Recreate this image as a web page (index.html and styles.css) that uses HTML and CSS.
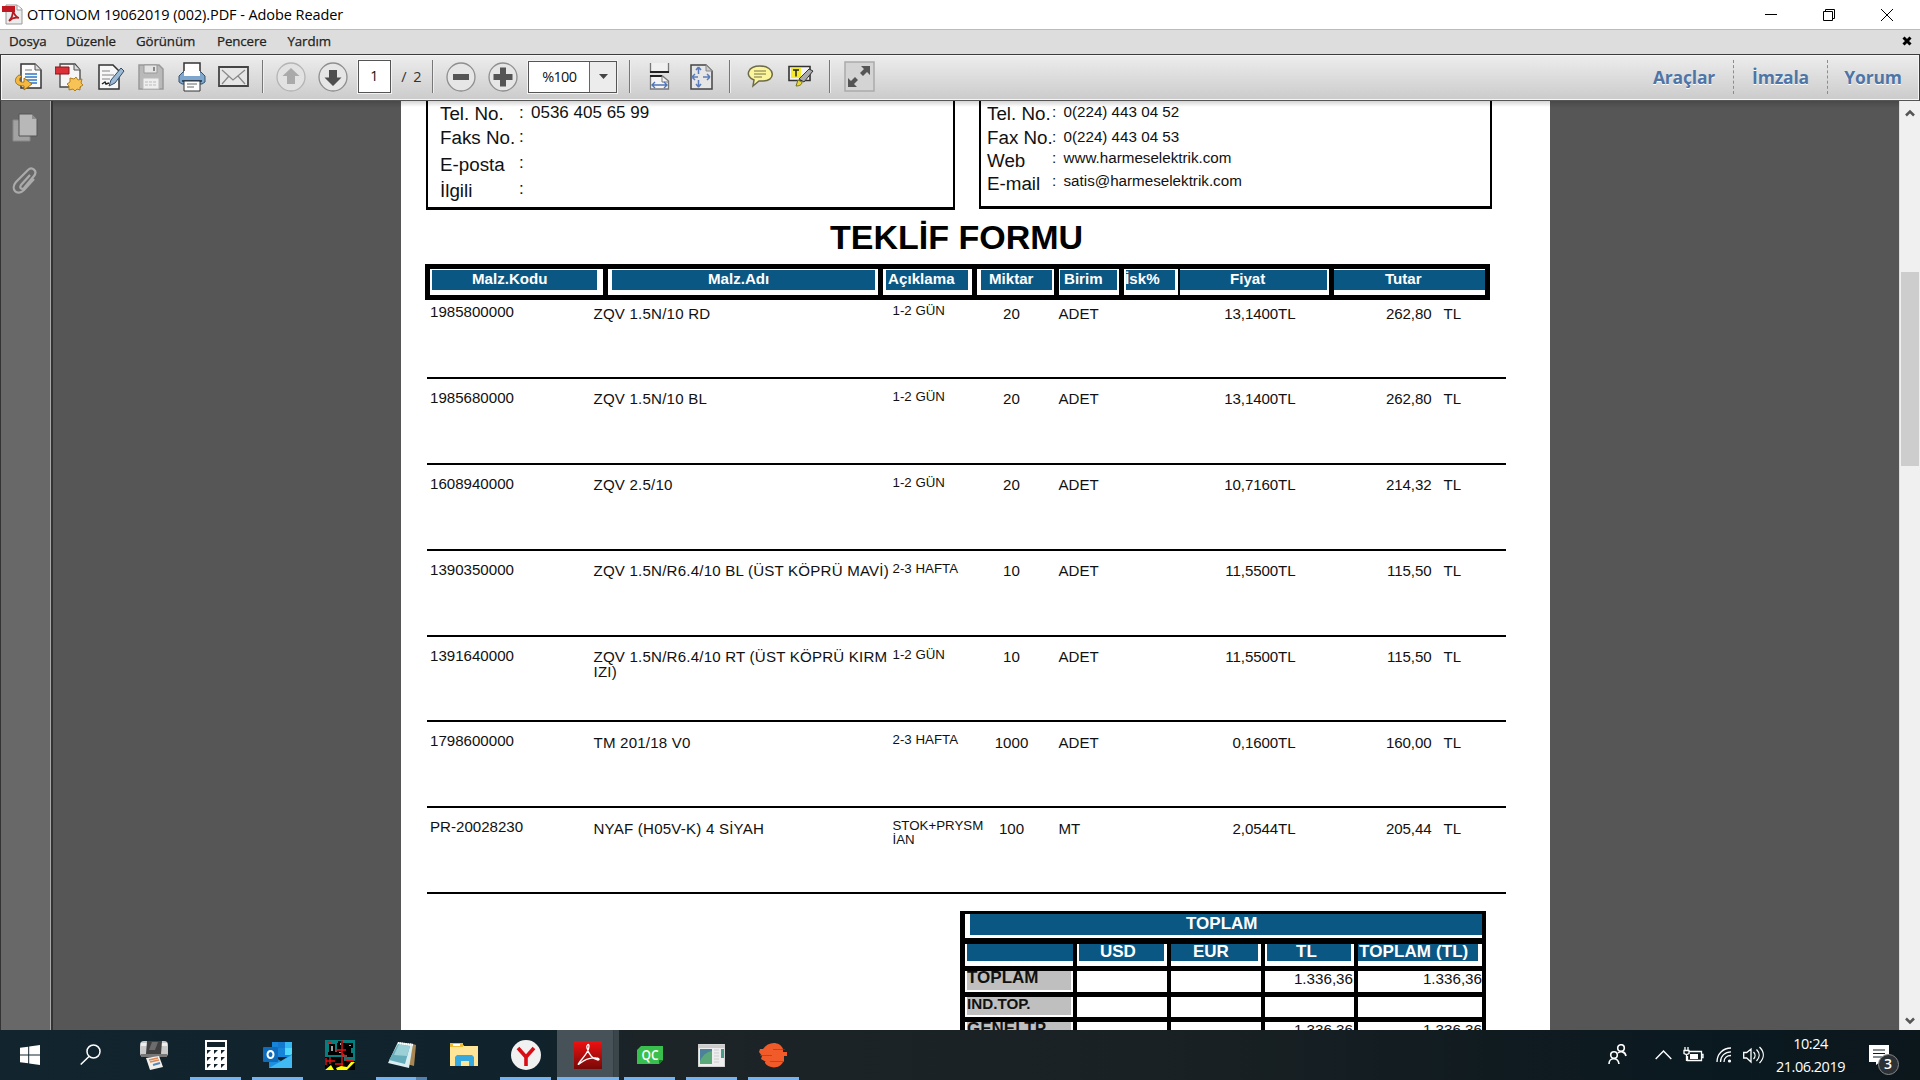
FILE: index.html
```html
<!DOCTYPE html>
<html lang="tr">
<head>
<meta charset="utf-8">
<title>OTTONOM 19062019 (002).PDF - Adobe Reader</title>
<link rel="stylesheet" href="styles.css">
</head>
<body>
<div class="titlebar">
  <svg class="app-icon" width="21" height="21" viewBox="0 0 21 21"><path d="M4 1h11l5 4v15H4z" fill="#ececec" stroke="#999"/><path d="M15 1v5h5" fill="#fff" stroke="#999"/><path d="M0 2h13v6H0z" fill="#c01722"/><path d="M11 6c1 4 2 7 6 8-4-1-7 0-10 3 3-3 4-7 4-11z" fill="none" stroke="#b11c22" stroke-width="1.8"/></svg>
  <span class="title-text">OTTONOM 19062019 (002).PDF - Adobe Reader</span>
  <div class="window-buttons">
    <svg width="12" height="12" viewBox="0 0 12 12"><path d="M0 5.5h12" stroke="#000"/></svg>
    <svg width="12" height="12" viewBox="0 0 12 12" fill="none" stroke="#000"><path d="M.5 2.500h9v9h-9zM2.500 2.500v-2h9v9h-2"/></svg>
    <svg width="12" height="12" viewBox="0 0 12 12"><path d="M0 0l12 12M12 0L0 12" stroke="#000"/></svg>
  </div>
</div>
<div class="menubar">
  <span class="m1">Dosya</span><span class="m2">Düzenle</span><span class="m3">Görünüm</span><span class="m4">Pencere</span><span class="m5">Yardım</span>
  <svg class="doc-close" width="10" height="10" viewBox="0 0 10 10"><path d="M1.500 1.500l7 7M8.500 1.500l-7 7" stroke="#000" stroke-width="3"/></svg>
</div>
<div class="toolbar">
  <div class="tools">
    <svg width="28" height="28" viewBox="0 0 28 28"><path d="M7 1h14l6 6v18H7z" fill="#fbfbfb" stroke="#333" stroke-width="1.500"/><path d="M21 1v6h6" fill="#ddd" stroke="#555"/><path d="M11 7h7" stroke="#bbb" stroke-width="2"/><path d="M11 11h12M11 14h12M11 17h12M14 20h9" stroke="#2f78c8" stroke-width="1.700"/><path d="M5 12c-5 3-6 11 5 11v4l8-6-8-6v4c-5 1-6-3-2-6z" fill="#f5b942" stroke="#9a6b10" stroke-width=".9"/></svg>
    <svg width="28" height="28" viewBox="0 0 28 28"><path d="M5 1h15l5 6v17H5z" fill="#f6f6f6" stroke="#444" stroke-width="1.300"/><path d="M19 1v6h6" fill="#ddd" stroke="#555"/><path d="M0 4h14v7H0z" fill="#dc3038" stroke="#8d1319"/><path d="M21 14l2 3 4-1-1 4 2 2-3 2v3l-3-1-2 2-2-2-4 1v-4l-2-2 3-2v-4l4 1z" fill="#f7c256" stroke="#b17f1b"/></svg>
    <svg width="28" height="28" viewBox="0 0 28 28"><path d="M2 2h14l6 6v18H2z" fill="#f7f7f7" stroke="#333" stroke-width="1.500"/><path d="M5 8h8M5 12h12M5 16h8" stroke="#aaa" stroke-width="1.300"/><path d="M5 21l3-2 1 2 3-1" fill="none" stroke="#222" stroke-width="1.500"/><path d="M12 23l2-6L24 5l3 3-9 12z" fill="#9db9d3" stroke="#2f4e6b"/></svg>
    <svg width="26" height="26" viewBox="0 0 26 26"><path d="M1 1h20l4 4v20H1z" fill="#b9b9b9" stroke="#999" stroke-width="1.500"/><path d="M6 1h13v8H6z" fill="#e4e4e4" stroke="#999"/><path d="M15 3h2v4h-2z" fill="#888"/><path d="M5 14h16v11H5z" fill="#eee" stroke="#bbb"/><path d="M7 18h12M7 21h12" stroke="#bbb" stroke-dasharray="3 1"/></svg>
    <svg width="28" height="30" viewBox="0 0 28 30"><path d="M6 1h16v12H6z" fill="#fff" stroke="#333" stroke-width="1.500"/><path d="M5 10h18l4 4v6l-3 2H4l-3-2v-6z" fill="#7fa6cc" stroke="#35526e"/><path d="M6 9h16v5H6z" fill="#fff"/><path d="M4 18h20v2H4z" fill="#334b62"/><path d="M6 19h16v10H6z" fill="#fff" stroke="#333"/><path d="M9 22h10M9 25h7" stroke="#999" stroke-width="1.500"/></svg>
    <svg width="31" height="22" viewBox="0 0 31 22"><path d="M1 1h29v19H1z" fill="#e6e6e6" stroke="#444" stroke-width="1.800"/><path d="M4 4l11 10L27 4M4 18l7-8M27 18l-7-8" fill="none" stroke="#888" stroke-width="1.200"/></svg>
    <i class="sep"></i>
    <svg width="30" height="30" viewBox="0 0 30 30"><circle cx="15" cy="15" r="14" fill="#e2e2e2" stroke="#b4b4b4" stroke-width="1.300"/><path d="M15 6l8.500 8H19v8h-8v-8H6.500z" fill="#aaa"/></svg>
    <svg width="30" height="30" viewBox="0 0 30 30"><circle cx="15" cy="15" r="14" fill="#e6e6e6" stroke="#8e8e8e" stroke-width="1.300"/><path d="M15 24l8.500-8.500H19V8h-8v7.500H6.500z" fill="#4e4e4e"/></svg>
    <span class="page-input">1</span>
    <span class="page-count">/&nbsp; 2</span>
    <i class="sep"></i>
    <svg width="30" height="30" viewBox="0 0 30 30"><circle cx="15" cy="15" r="14" fill="#e6e6e6" stroke="#8e8e8e" stroke-width="1.300"/><path d="M7 12h16v6H7z" fill="#555"/></svg>
    <svg width="30" height="30" viewBox="0 0 30 30"><circle cx="15" cy="15" r="14" fill="#e6e6e6" stroke="#8e8e8e" stroke-width="1.300"/><path d="M5.500 12H12V5.500h6V12h6.500v6H18v6.500h-6V18H5.500z" fill="#555"/></svg>
    <span class="zoom-box"><b>%100</b><i><svg width="9" height="5" viewBox="0 0 9 5"><path d="M0 0h9L4.500 5z" fill="#444"/></svg></i></span>
    <i class="sep"></i>
    <svg width="21" height="27" viewBox="0 0 21 27"><path d="M1.500 0v9h18V0" fill="#f0f0f0" stroke="#777" stroke-width="1.300"/><path d="M1 9h19" stroke="#222" stroke-width="2"/><path d="M1.500 26V13h12l6 5v8z" fill="#f4f4f4" stroke="#777" stroke-width="1.300"/><path d="M1 13h12" stroke="#222" stroke-width="2"/><path d="M13 13v6h6" fill="none" stroke="#777"/><path d="M3 22h15M6 19l-3 3 3 3M15 19l3 3-3 3" fill="none" stroke="#4f74b8" stroke-width="1.400"/></svg>
    <svg width="23" height="26" viewBox="0 0 23 26"><path d="M1 1h15l6 6v18H1z" fill="#e6e6e6" stroke="#444" stroke-width="1.500"/><path d="M16 1v6h6" fill="#ccc" stroke="#888"/><path d="M8.500 3v7M8.500 3L6 6M8.500 3L11 6M8.500 23v-7M8.500 23L6 20M8.500 23l2.500-3M2 13h6M2 13l3-3M2 13l3 3M20 13h-7M20 13l-3-3M20 13l-3 3" fill="none" stroke="#5b7cba" stroke-width="1.500"/></svg>
    <i class="sep"></i>
    <svg width="26" height="23" viewBox="0 0 26 23"><path d="M13 1c16 0 16 16 2 15l-3 0-6 5 1-6C-3 11 1 1 13 1z" fill="#fbf59b" stroke="#6d6a4a" stroke-width="1.500"/><path d="M7 6h12M7 9h12M7 12h8" stroke="#77734a"/></svg>
    <svg width="26" height="23" viewBox="0 0 26 23"><path d="M1 1.500h21v14H1z" fill="#f4f4f4" stroke="#333" stroke-width="1.600"/><path d="M3 3h10v10H3z" fill="#f6ea2d"/><path d="M5 5h6M8 5v6.500" stroke="#222" stroke-width="1.500"/><path d="M11 14L21 4l4 2-9 11z" fill="#aaa" stroke="#333"/><path d="M8 21l2-6 4 2c0 3-3 4-6 4z" fill="#e8d839" stroke="#77701a"/></svg>
    <i class="sep"></i>
    <svg width="31" height="31" viewBox="0 0 31 31"><path d="M1 1h29v29H1z" fill="#d4d4d4" stroke="#aaa" stroke-width="1.500"/><path d="M17 5h9v9l-3-3-4 4-3-3 4-4z" fill="#555"/><path d="M13 26H4v-9l3 3 4-4 3 3-4 4z" fill="#555"/></svg>
  </div>
  <div class="panes"><span class="p1">Araçlar</span><span class="p2">İmzala</span><span class="p3">Yorum</span></div>
</div>
<div class="viewer">
  <div class="sidebar">
    <svg width="26" height="29" viewBox="0 0 26 29"><path d="M1 7h17v21H1z" fill="#a2a2a2" stroke="#888"/><path d="M7 1h13l5 5v17H7z" fill="#b8b8b8" stroke="#555"/><path d="M20 1v5h5" fill="#8d8d8d"/></svg>
    <svg width="26" height="29" viewBox="0 0 26 29"><path d="M18 9L9 19c-2 3 1 5 3 3L22 10c4-5-2-10-6-6L4 16c-6 7 1 15 8 8l10-11" fill="none" stroke="#ababab" stroke-width="2.200"/></svg>
  </div>
  <div class="desk">
    <div class="page">
      <div class="boxes">
        <div class="box box-left">
          <div class="line l1"><span>Tel. No.</span><i>:</i><b>0536 405 65 99</b></div>
          <div class="line l2"><span>Faks No.</span><i>:</i></div>
          <div class="line l3"><span>E-posta</span><i>:</i></div>
          <div class="line l4"><span>İlgili</span><i>:</i></div>
        </div>
        <div class="box box-right">
          <div class="line r1"><span>Tel. No.</span><i>:</i><b>0(224) 443 04 52</b></div>
          <div class="line r2"><span>Fax No.</span><i>:</i><b>0(224) 443 04 53</b></div>
          <div class="line r3"><span>Web</span><i>:</i><b>www.harmeselektrik.com</b></div>
          <div class="line r4"><span>E-mail</span><i>:</i><b>satis@harmeselektrik.com</b></div>
        </div>
      </div>
      <h1>TEKLİF FORMU</h1>
      <div class="head">
        <div class="h1"><span>Malz.Kodu</span></div><div class="h2"><span>Malz.Adı</span></div><div class="h3"><span>Açıklama</span></div><div class="h4"><span>Miktar</span></div><div class="h5"><span>Birim</span></div><div class="h6"><span>İsk%</span></div><div class="h7"><span>Fiyat</span></div><div class="h8"><span>Tutar</span></div>
      </div>
      <div class="items">
        <div class="item"><span class="code">1985800000</span><span class="name">ZQV 1.5N/10 RD</span><span class="note">1-2 GÜN</span><span class="qty">20</span><span>ADET</span><span class="num">13,1400TL</span><span class="num">262,80</span><span class="cur">TL</span></div>
        <div class="item"><span class="code">1985680000</span><span class="name">ZQV 1.5N/10 BL</span><span class="note">1-2 GÜN</span><span class="qty">20</span><span>ADET</span><span class="num">13,1400TL</span><span class="num">262,80</span><span class="cur">TL</span></div>
        <div class="item"><span class="code">1608940000</span><span class="name">ZQV 2.5/10</span><span class="note">1-2 GÜN</span><span class="qty">20</span><span>ADET</span><span class="num">10,7160TL</span><span class="num">214,32</span><span class="cur">TL</span></div>
        <div class="item"><span class="code">1390350000</span><span class="name">ZQV 1.5N/R6.4/10 BL (ÜST KÖPRÜ MAVİ)</span><span class="note">2-3 HAFTA</span><span class="qty">10</span><span>ADET</span><span class="num">11,5500TL</span><span class="num">115,50</span><span class="cur">TL</span></div>
        <div class="item"><span class="code">1391640000</span><span class="name">ZQV 1.5N/R6.4/10 RT (ÜST KÖPRÜ KIRM<br>IZI)</span><span class="note">1-2 GÜN</span><span class="qty">10</span><span>ADET</span><span class="num">11,5500TL</span><span class="num">115,50</span><span class="cur">TL</span></div>
        <div class="item"><span class="code">1798600000</span><span class="name">TM 201/18 V0</span><span class="note">2-3 HAFTA</span><span class="qty">1000</span><span>ADET</span><span class="num">0,1600TL</span><span class="num">160,00</span><span class="cur">TL</span></div>
        <div class="item"><span class="code">PR-20028230</span><span class="name">NYAF (H05V-K) 4 SİYAH</span><span class="note">STOK+PRYSM<br>İAN</span><span class="qty">100</span><span>MT</span><span class="num">2,0544TL</span><span class="num">205,44</span><span class="cur">TL</span></div>
      </div>
      <div class="totals">
        <div class="t-title"><span>TOPLAM</span></div>
        <div class="t-row t-head"><div><span></span></div><div class="c-usd"><span>USD</span></div><div class="c-eur"><span>EUR</span></div><div class="c-tl"><span>TL</span></div><div class="c-sum"><span>TOPLAM (TL)</span></div></div>
        <div class="t-row t-a"><div><span>TOPLAM</span></div><div></div><div></div><div>1.336,36</div><div>1.336,36</div></div>
        <div class="t-row t-b"><div><span>IND.TOP.</span></div><div></div><div></div><div></div><div></div></div>
        <div class="t-row t-a t-c"><div><span>GENELTP</span></div><div></div><div></div><div>1.336,36</div><div>1.336,36</div></div>
      </div>
    </div>
  </div>
  <div class="scroll">
    <svg width="10" height="8" viewBox="0 0 10 8"><path d="M1 6.500l4-4 4 4" fill="none" stroke="#555" stroke-width="2.500"/></svg>
    <div class="thumb"></div>
    <svg class="down" width="10" height="8" viewBox="0 0 10 8"><path d="M1 1.500l4 4 4-4" fill="none" stroke="#555" stroke-width="2.500"/></svg>
  </div>
</div>
<div class="taskbar">
  <div class="start"><svg width="20" height="20" viewBox="0 0 20 20" fill="#fff"><path d="M0 2.800l8.200-1.100v7.800H0zM9.200 1.500L20 0v9.500H9.200zM0 10.500h8.200v7.800L0 17.200zM9.200 10.500H20V20L9.200 18.500z"/></svg></div>
  <div class="search"><svg width="21" height="21" viewBox="0 0 21 21" fill="none" stroke="#fff" stroke-width="1.500"><circle cx="13.500" cy="7.500" r="6.500"/><path d="M9 12.500L.7 20.500"/></svg></div>
  <div class="task"><svg width="28" height="30" viewBox="0 0 28 30"><rect y="1" width="28" height="16" rx="4" fill="#c9c9c9"/><path d="M1 3h26v3H1z" fill="#eee"/><path d="M7 1h15l-1 13H6z" fill="#3f3f3f"/><path d="M12 2h6l-3 8H9z" fill="#6c6c6c"/><path d="M1 14h26v3H1z" fill="#777"/><path d="M6 18l13-2 4 11-13 3z" fill="#f1efe9"/><path d="M9 20l9-2M10 22l9-2" stroke="#d85" stroke-width="1.500"/><path d="M13 25l7-2" stroke="#58b" stroke-width="2"/></svg></div>
  <div class="task open"><svg width="22" height="30" viewBox="0 0 22 30"><path d="M0 0h22v30H0z" fill="#fff"/><path d="M2 2h18v5H2zM2 10h4l-4 4zM9 10h4l-4 4zM16 10h4l-4 4zM2 17h4l-4 4zM9 17h4l-4 4zM16 17h4l-4 4zM2 24h4l-4 4zM9 24h4l-4 4zM16 24h4l-4 4z" fill="#13232b"/></svg></div>
  <div class="task open"><svg width="30" height="28" viewBox="0 0 30 28"><path d="M9 1h20v15H9z" fill="#1685d9"/><path d="M15 1h7v6h-7z" fill="#1478cc"/><path d="M22 1h7v6h-7z" fill="#35b8f1"/><path d="M22 7h7v7h-7z" fill="#50d9ff"/><path d="M6 13l12 7 11-7v14H6z" fill="#1b90df"/><path d="M6 27l23-13v13z" fill="#41b9f2"/><rect y="6" width="15" height="15" rx="1" fill="#0f6cbd"/><ellipse cx="7.500" cy="13.500" rx="3" ry="3.600" fill="none" stroke="#fff" stroke-width="2"/></svg></div>
  <div class="task"><svg width="30" height="30" viewBox="0 0 30 30"><path d="M0 0h30v30H0z" fill="#087d7d"/><path d="M0 17h19v4h11v9H0z"/><path d="M12 3h14v12H12zM3 12h9v3H3z"/><path d="M5 5h4v7H5zM14 2h3v4h-3zM23 4h4v3h-4zM13 11h4v3h-4zM23 14h4v2h-4z" fill="#a0a0a0" stroke="#000" stroke-width="2"/><path d="M2 2h4M17 0v29M11 10h10M1 18v7M1 21h9M5 24V17M10 24h8M20 20l9 1M16 12l6 6" fill="none" stroke="#e41313" stroke-width="1.400"/><path d="M0 30l6-5 3 5zM11 28l5-2 6 1 4-5h4l-8 8H12z" fill="#ff0"/></svg></div>
  <div class="task open grouped"><svg width="28" height="27" viewBox="0 0 28 27"><path d="M22 1l6 2-2 21-7-2z" fill="#a78855"/><path d="M10 0l15 2-4 24-21-5z" fill="#d9eef1"/><path d="M10 2l12 2-5 18L1 18z" fill="#65adba"/><path d="M11 2l11 2-3 10-13-1z" fill="#9bd0d7"/><path d="M10 1l15 2" stroke="#fff" stroke-width="2" stroke-dasharray="1 1"/></svg></div>
  <div class="task"><svg width="28" height="24" viewBox="0 0 28 24"><path d="M0 0h12l2 3h14v20H0z" fill="#ffe597"/><path d="M0 0h13v4H0z" fill="#eebb35"/><path d="M3 1h7v2H3z" fill="#fff"/><path d="M5 14l2-2h15l2 2v9h-5v-5h-8v5H5z" fill="#36a9e0"/></svg></div>
  <div class="task open"><svg width="30" height="30" viewBox="0 0 30 30"><circle cx="15" cy="15" r="15" fill="#f1f1f1"/><path d="M7 8l8 9 8-9M15 16v10" fill="none" stroke="#d80d16" stroke-width="3.600"/></svg></div>
  <div class="task open active"><svg width="28" height="28" viewBox="0 0 28 28"><defs><linearGradient id="g" x2="0" y2="1"><stop stop-color="#f01110"/><stop offset="1" stop-color="#760907"/></linearGradient></defs><path d="M0 0h28v28H0z" fill="url(#g)"/><path d="M5 22c3-5 10-10 10-17 0-3-3-1-2 2 2 7 6 11 11 12 2 0 1-2-2-2-6-1-12 2-17 6-1 1-1 0 0-1z" fill="none" stroke="#fff" stroke-width="1.300"/></svg></div>
  <div class="task open"><svg width="26" height="18" viewBox="0 0 26 18"><path d="M4 0h22v14l-4 4H0V4z" fill="#39bf4d"/><path d="M22 18l4-4h-4z" fill="#167a29"/><text x="13" y="14" text-anchor="middle" font-family="Open Sans, sans-serif" font-size="13.500" font-weight="600" textLength="17" lengthAdjust="spacingAndGlyphs" fill="#fff">QC</text></svg></div>
  <div class="task open"><svg width="27" height="23" viewBox="0 0 27 23"><path d="M0 0h27v23H0z" fill="#eee" stroke="#bbb"/><path d="M0 1h27v3H0z" fill="#ccc"/><path d="M2 5h12v15H2z" fill="#4d8099"/><path d="M2 17c4-8 8-9 12-10v13H2z" fill="#5ba979"/><path d="M16 6h5M16 9h5M16 12h5M16 15h5M16 18h5" stroke="#ccc"/><path d="M23 5h3v9h-3z" fill="#4a9a8c"/></svg></div>
  <div class="task open"><svg width="29" height="25" viewBox="0 0 29 25"><path d="M4 6c5-8 17-8 20 0zM1 6h23v3l4 0v4H3L0 9zM3 13h22v6H7l-5-3zM6 19h18c-3 7-14 7-18 1z" fill="#f15a29"/><path d="M1 12.500h12M14 6.500h12M11 18.500h14" stroke="#a33512" stroke-width=".6"/></svg></div>
  <div class="tray">
    <svg class="people" width="20" height="20" viewBox="0 0 20 20" fill="none" stroke="#fff" stroke-width="1.600"><circle cx="13" cy="4" r="3.300"/><circle cx="6" cy="11" r="3.300"/><path d="M10 9c2-2 7-2 8 3M1 20c0-7 9-7 10 0"/></svg>
    <svg class="chev" width="17" height="10" viewBox="0 0 17 10" fill="none" stroke="#fff" stroke-width="1.400"><path d="M.7 9l7.800-8 7.800 8"/></svg>
    <svg class="batt" width="21" height="16" viewBox="0 0 21 16" fill="none" stroke="#fff"><path d="M6 4.500h12.500v9H4.500V9M18.500 7.500H20v3h-1.500M2 0v3M5 0v3M1 3.500h5v3l-2.500 1L1 6.500zM3.500 8v6" stroke-width="1.300"/><path d="M7 7h8v5H7z" fill="#fff" stroke="none"/></svg>
    <svg class="wifi" width="16" height="16" viewBox="0 0 16 16" fill="none" stroke="#fff"><path d="M1 15C1 7 7 1 15 1M4.500 15C4.500 9 9 4.800 15 4.800M8 15c0-4 3-6.500 7-6.500" stroke-width="1.300"/><circle cx="13.500" cy="14" r="1.600" fill="#fff" stroke="none"/></svg>
    <svg class="vol" width="21" height="18" viewBox="0 0 21 18" fill="none" stroke="#fff" stroke-width="1.300"><path d="M.7 6.500h3L8 3v13l-4.300-4h-3zM10.500 6c2 2 2 5 0 7M13.500 3.500c3.500 3.500 3.500 8 0 11.500M16.500 1c5 5 5 11 0 16"/></svg>
    <div class="clock">10:24<br>21.06.2019</div>
    <div class="notif"><svg width="20" height="20" viewBox="0 0 20 20"><path d="M0 0h20v17H11l-4 3v-3H0z" fill="#fff"/><path d="M4 5h12M4 8.500h12M4 12h9" stroke="#0e1c24"/></svg><b>3</b></div>
  </div>
</div>
</body>
</html>
```
FILE: styles.css
```css
* { box-sizing: border-box; }
body { margin: 0; width: 1920px; height: 1080px; overflow: hidden; display: flex; flex-direction: column; background: #fff; font-family: "Open Sans", "Noto Sans", sans-serif; color: #111; }
svg { display: block; flex: none; }
i, b { font-style: normal; font-weight: inherit; }

.titlebar { height: 29px; flex: none; display: flex; align-items: center; padding: 0 18px 0 2px; }
.app-icon { margin-right: 4px; }
.title-text { font-size: 14.5px; line-height: 20px; letter-spacing: -.08px; color: #000; white-space: nowrap; }
.window-buttons { margin-left: auto; display: flex; gap: 46px; padding-right: 9px; }

.menubar { height: 25px; flex: none; display: flex; align-items: center; background: #ddd; border-top: 1px solid #bbb; padding: 0 8px 2px 9px; font-size: 13.3px; color: #222; -webkit-text-stroke: .25px #222; }
.menubar span { white-space: nowrap; line-height: 22px; letter-spacing: -.1px; }
.m1 { width: 57px; } .m2 { width: 70px; } .m3 { width: 81px; } .m4 { width: 70.500px; }
.doc-close { margin-left: auto; }

.toolbar { height: 47px; flex: none; display: flex; justify-content: space-between; border: 1px solid #3c3c3c; border-bottom-color: #555; background: linear-gradient(#ededed, #cbcbcb); box-shadow: inset 0 0 0 1px #f6f6f6; }
.tools { padding: 0 0 2px 6px; display: grid; align-items: center; justify-items: center; grid-template-columns: 41px 41.5px 42px 39px 42px 42px 16px 41.5px 41.5px 41.5px 32.5px 10px 47.5px 35.5px 104.5px 10px 49px 35px 22px 37px 46px 12px 47px; }
.sep { width: 2px; height: 33px; background: #777; border-right: 1px solid #eee; }
.page-input { width: 33px; height: 33px; background: #fff; border: 1px solid #555; outline: 1px solid #f3f3f3; font-size: 14px; line-height: 30px; text-align: center; }
.page-count { font-size: 14.5px; color: #333; white-space: nowrap; letter-spacing: -.3px; }
.zoom-box { width: 89px; height: 32px; display: flex; background: #fff; border: 1px solid #555; outline: 1px solid #f3f3f3; font-size: 14.5px; line-height: 29px; letter-spacing: -.75px; }
.zoom-box b { width: 60px; text-align: center; }
.zoom-box i { flex: 1; background: #ececec; border-left: 1px solid #666; display: flex; align-items: center; justify-content: center; }
.panes { display: flex; align-items: center; font-size: 17.5px; font-weight: 700; color: #4f74a6; line-height: 34px; text-shadow: 0 1px 0 #fff; padding: 0 1px 2px 0; }
.panes span { text-align: center; letter-spacing: -.2px; }
.p1 { width: 98px; } .p2 { width: 95px; border-left: 1px dashed #8c8c8c; border-right: 1px dashed #8c8c8c; } .p3 { width: 90px; }

.viewer { height: 929px; flex: none; display: flex; overflow: hidden; }
.sidebar { width: 53px; padding: 12px 0 0 11px; background: #686868; border-left: 1px solid #333; border-right: 2px solid #333; box-shadow: inset -1px 0 #a9a9a9; display: flex; flex-direction: column; gap: 24px; }
.desk { flex: 1; overflow: hidden; background: linear-gradient(#494949, #565656 7px); padding-left: 348px; }
.page { width: 1149px; height: 929px; overflow: hidden; background: linear-gradient(#d5d5d5, #fff 6px); padding-left: 24px; font-family: "Liberation Sans", Arial, sans-serif; color: #111; font-size: 15.1px; display: flex; flex-direction: column; }

.boxes { display: flex; gap: 24px; padding-left: 1px; height: 109px; flex: none; align-items: flex-start; }
.box { border: 3px solid #000; border-left-width: 2px; border-right-width: 2px; border-top: 0; display: flex; flex-direction: column; }
.box-left { width: 529px; height: 109px; padding-left: 12px; }
.box-right { width: 513px; height: 108px; padding-left: 6px; }
.line { display: grid; height: 20px; line-height: 20px; white-space: nowrap; flex: none; }
.line span { font-size: 18.8px; }
.box-left .line { grid-template-columns: 79px 12px auto; font-size: 17px; }
.box-right .line { grid-template-columns: 65px 11.500px auto; font-size: 15.2px; }
.l1 { margin-top: 3px; } .l2 { margin-top: 4px; } .l3 { margin-top: 7px; } .l4 { margin-top: 6px; }
.r1 { margin-top: 3px; } .r2 { margin-top: 4px; } .r3 { margin-top: 3px; } .r4 { margin-top: 3px; }
.line i, .line b { margin-top: -1px; }
.l1 i, .l1 b { margin-top: -1.500px; }
.l3 i, .l4 i, .r1 i, .r1 b { margin-top: -2px; }
.r3 i, .r3 b, .r4 i, .r4 b { margin-top: -3px; }

h1 { margin: 6px 0 0 405px; height: 48px; flex: none; line-height: 42px; font-size: 34px; white-space: nowrap; color: #000; }

.head { width: 1065px; height: 36px; flex: none; background: #000; padding: 5px 5px 5px 5px; display: flex; color: #fff; font-weight: 700; font-size: 15.1px; }
.head div { background: #fff; height: 26px; padding-top: 1px; flex: none; }
.head span { display: block; height: 20px; line-height: 17px; background: #0a5784; white-space: nowrap; overflow: hidden; }
.head .h1 { width: 173px; padding-left: 2px; padding-right: 6px; } .h1 span { padding-left: 40px; }
.h2 { width: 270px; margin-left: 5px; padding-left: 4px; padding-right: 3px; } .h2 span { padding-left: 96px; }
.h3 { width: 89px; margin-left: 5px; padding-left: 3px; padding-right: 4px; } .h3 span { padding-left: 2px; letter-spacing: .05px; }
.h4 { width: 77px; margin-left: 5px; padding-left: 4px; padding-right: 2px; } .h4 span { padding-left: 8px; }
.h5 { width: 60px; margin-left: 5px; padding-left: 1px; padding-right: 2px; } .h5 span { padding-left: 4px; }
.h6 { width: 54px; margin-left: 5px; padding-left: 2px; padding-right: 3px; } .h6 span { text-indent: -1px; letter-spacing: .1px; }
.h7 { width: 149px; margin-left: 2px; padding-right: 2px; } .h7 span { padding-left: 50px; }
.h8 { width: 151px; margin-left: 5px; } .h8 span { padding-left: 51px; }

.items { margin-top: -7px; padding-left: 2px; flex: none; }
.item { width: 1079px; height: 85.900px; border-bottom: 2px solid #000; display: grid; grid-template-columns: 163.500px 299px 92px 74px 112px 125px 136px auto; padding: 12.500px 0 0 3px; line-height: 15px; white-space: nowrap; align-items: start; }
.code { margin-top: -1.500px; }
.name { letter-spacing: .2px; }
.note { font-size: 13.3px; line-height: 13.400px; margin-top: -1.500px; }
.qty { width: 54px; text-align: center; }
.num { text-align: right; letter-spacing: -.1px; }
.cur { padding-left: 12px; }

.totals { width: 526px; margin: 17px 0 0 535px; flex: none; background: #000; padding: 3px 4px 0 5px; font-size: 17px; }
.t-title { background: #fff; height: 24px; padding: 0 0 3px 5px; margin-bottom: 6px; }
.t-title span { display: block; height: 21px; line-height: 20px; padding-left: 216px; background: #0a5784; color: #fff; font-weight: 700; }
.t-row { display: grid; grid-template-columns: 108px 90px 90px 89px 124px; column-gap: 4px; margin-bottom: 5px; }
.t-row div { background: #fff; height: 21px; text-align: right; padding-right: 1px; font-size: 15.2px; line-height: 15px; white-space: nowrap; }
.t-row div:last-child { padding-right: 0; }
.t-row div:first-child { padding: 0 2px 0 2px; text-align: left; }
.t-row div:first-child span { display: block; background: #bfbfbf; height: 19px; font-weight: 700; color: #111; }
.t-row.t-a div:first-child span { font-size: 17px; line-height: 14px; }
.t-row.t-b div { height: 20px; }
.t-row.t-b div:first-child span { height: 18px; line-height: 13px; }
.t-row.t-head div { height: 22px; padding: 0 3px 0 2px; }
.t-row.t-head div span { display: block; height: 17px; background: #0a5784; color: #fff; font-size: 17px; font-weight: 700; line-height: 15px; text-align: left; }
.t-row.t-head div:first-child { padding-right: 0; }
.t-row.t-head div.c-usd span { padding-left: 21px; }
.t-row.t-head div.c-eur { padding-left: 0; }
.t-row.t-head div.c-eur span { padding-left: 22px; }
.t-row.t-head div.c-tl span { padding-left: 29px; }
.t-row.t-head div.c-sum { padding-left: 0; padding-right: 4px; }
.t-row.t-head div.c-sum span { padding-left: 1px; letter-spacing: .1px; }

.scroll { width: 21px; background: #f0f0f0; border-left: 1px solid #ddd; display: flex; flex-direction: column; align-items: center; padding: 8px 0 5px; }
.thumb { width: 18px; height: 194px; margin-top: 155px; background: #cdcdcd; }
.down { margin-top: auto; }

.taskbar { height: 50px; flex: none; display: flex; background: linear-gradient(90deg, #12242d, #10222b 28%, #1d2427 34%, #1a2124 60%, #101b20 78%, #0a1920 90%, #0c171c); }
.start { width: 60px; padding: 15px 0 0 20px; }
.search { width: 62.500px; padding: 14px 0 0 20px; }
.task { width: 62px; display: flex; align-items: center; justify-content: center; }
.open { background: linear-gradient(#76b3ee, #76b3ee) center bottom / 51px 3px no-repeat; }
.grouped { background: linear-gradient(90deg, #76b3ee 40px, #5381ae 40px) center bottom / 51px 3px no-repeat; }
.active { background: linear-gradient(#76b3ee, #76b3ee) center bottom / 100% 3px no-repeat, linear-gradient(90deg, #465257 56px, #2d383c 56px, #3b464a 57px); }
.tray { flex: 1; display: flex; padding-left: 803px; }
.people { margin-top: 14px; } .chev { margin: 20px 0 0 27px; } .batt { margin: 17px 0 0 11px; } .wifi { margin: 17px 0 0 12px; } .vol { margin: 16px 0 0 11px; }
.clock { width: 94px; text-align: center; color: #fff; font-size: 14.500px; line-height: 23px; padding-top: 2px; letter-spacing: -.5px; }
.notif { margin: 15px 0 0 11px; position: relative; }
.notif b { position: absolute; left: 9px; top: 9px; width: 21px; height: 21px; border-radius: 50%; background: #2b3135; border: 1px solid #888; color: #fff; font-size: 14px; font-weight: 600; line-height: 18px; text-align: center; }
```
